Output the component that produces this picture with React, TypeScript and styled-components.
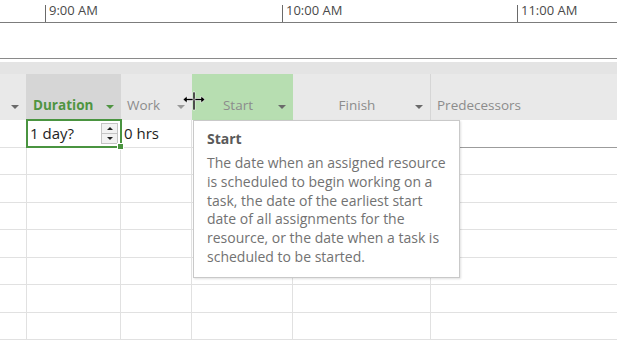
import styled, { createGlobalStyle } from 'styled-components';

const GlobalStyle = createGlobalStyle`
  html, body {
    margin: 0;
    padding: 0;
    background: #ffffff;
    overflow: hidden;
  }
  body {
    font-family: 'Open Sans', 'Noto Sans', sans-serif;
  }
`;

// layout
const COLUMNS = '27px 94px 71px 101px 138px 1fr';
const ROW_COUNT = 8;

const Page = styled.div({
  position: 'relative',
  width: '617px',
  height: '344px',
  overflow: 'hidden',
  background: '#ffffff',
});

// timescale
const Timescale = styled.div({
  display: 'flex',
  height: '22px',
  borderBottom: '1px solid #7c7c7c',
});

const TickSpacer = styled.div({
  width: '45px',
  flexShrink: 0,
});

const Tick = styled.div<{ $width: number }>((p) => ({
  width: `${p.$width}px`,
  flexShrink: 0,
  marginTop: '5px',
  borderLeft: '1px solid #6a6a6a',
  paddingLeft: '3px',
  fontSize: '13px',
  lineHeight: '11px',
  color: '#4a4a4a',
  whiteSpace: 'nowrap',
}));

const GanttBand = styled.div({
  height: '35px',
  borderBottom: '1px solid #8a8a8a',
});

const HeaderBand = styled.div({
  marginTop: '3px',
  height: '12px',
  background: '#e4e4e4',
});

// table
const Table = styled.div({
  display: 'grid',
  gridTemplateColumns: COLUMNS,
});

const HeaderCell = styled.div<{ $bg?: string; $sep?: boolean }>((p) => ({
  height: '46px',
  background: p.$bg ?? '#e9e9e9',
  borderRight: p.$sep ? '1px solid #d6d6d6' : 'none',
  display: 'flex',
  alignItems: 'flex-end',
  paddingBottom: '6px',
  paddingLeft: '6px',
  paddingRight: '7px',
  boxSizing: 'border-box',
  fontSize: '13.5px',
  color: '#8c8c8c',
}));

const HeaderLabel = styled.span<{ $active?: boolean; $center?: boolean }>((p) => ({
  flex: 1,
  textAlign: p.$center ? 'center' : 'left',
  fontWeight: p.$active ? 700 : 400,
  color: p.$active ? '#4f9441' : 'inherit',
  lineHeight: '18px',
  whiteSpace: 'nowrap',
}));

const Caret = styled.span<{ $color?: string }>((p) => ({
  width: 0,
  height: 0,
  marginBottom: '5px',
  borderLeft: '4px solid transparent',
  borderRight: '4px solid transparent',
  borderTop: `4px solid ${p.$color ?? '#6a6a6a'}`,
}));

const Cell = styled.div<{ $dark?: boolean; $noRight?: boolean }>((p) => ({
  position: 'relative',
  height: '27.5px',
  boxSizing: 'border-box',
  borderRight: p.$noRight ? 'none' : '1px solid #e1e1e1',
  borderBottom: `1px solid ${p.$dark ? '#9c9c9c' : '#e1e1e1'}`,
  display: 'flex',
  alignItems: 'center',
  paddingLeft: '3px',
  fontSize: '15px',
  color: '#1e1e1e',
}));

const ActiveCell = styled.div({
  position: 'absolute',
  inset: '-1px -2px -1px -1px',
  border: '2px solid #4a9440',
  display: 'flex',
  alignItems: 'center',
  justifyContent: 'space-between',
  paddingLeft: '2px',
  paddingRight: '2px',
  zIndex: 2,
});

const FillHandle = styled.span({
  position: 'absolute',
  right: '-4px',
  bottom: '-4px',
  width: '5px',
  height: '5px',
  background: '#4a9440',
  border: '1px solid #ffffff',
});

const Spinner = styled.div({
  display: 'flex',
  flexDirection: 'column',
  width: '15px',
  border: '1px solid #c4c4c4',
  background: '#f2f2f2',
});

const SpinButton = styled.div<{ $down?: boolean }>((p) => ({
  height: '9px',
  display: 'flex',
  alignItems: 'center',
  justifyContent: 'center',
  borderTop: p.$down ? '1px solid #c4c4c4' : 'none',
  '&::after': {
    content: '""',
    borderLeft: '3px solid transparent',
    borderRight: '3px solid transparent',
    [p.$down ? 'borderTop' : 'borderBottom']: '3px solid #222',
  },
}));

// overlays
const Tooltip = styled.div({
  position: 'absolute',
  left: '193px',
  top: '120px',
  width: '267px',
  height: '158px',
  boxSizing: 'border-box',
  background: '#ffffff',
  border: '1px solid #c9c9c9',
  boxShadow: '1px 1px 2px rgba(0, 0, 0, 0.12)',
  padding: '8px 6px 0 13px',
  zIndex: 5,
});

const TooltipTitle = styled.div({
  fontSize: '14px',
  fontWeight: 700,
  color: '#5a5a5a',
  lineHeight: '20px',
  marginBottom: '5px',
});

const TooltipBody = styled.div({
  fontSize: '14px',
  color: '#727272',
  lineHeight: '18.8px',
  whiteSpace: 'nowrap',
});

const ResizeCursor = styled.svg({
  position: 'absolute',
  left: '182px',
  top: '91px',
  zIndex: 6,
});

const headers = [
  { label: '', sep: true },
  { label: 'Duration', bg: '#d6d6d6', active: true },
  { label: 'Work', sep: false },
  { label: 'Start', bg: '#b7deb1', center: true },
  { label: 'Finish', center: true, sep: true },
  { label: 'Predecessors', noCaret: true },
];

const tooltipLines = [
  'The date when an assigned resource',
  'is scheduled to begin working on a',
  'task, the date of the earliest start',
  'date of all assignments for the',
  'resource, or the date when a task is',
  'scheduled to be started.',
];

const App = () => {
  const rows = Array.from({ length: ROW_COUNT }, (_, i) => i);
  return (
    <Page>
      <GlobalStyle />
      <Timescale>
        <TickSpacer />
        <Tick $width={233}>9:00 AM</Tick>
        <Tick $width={231}>10:00 AM</Tick>
        <Tick $width={120}>11:00 AM</Tick>
      </Timescale>
      <GanttBand />
      <HeaderBand />
      <Table>
        {headers.map((h, i) => (
          <HeaderCell key={i} $bg={h.bg} $sep={h.sep}>
            <HeaderLabel $active={h.active} $center={h.center}>
              {h.label}
            </HeaderLabel>
            {!h.noCaret && (
              <Caret $color={h.active ? '#4f9441' : i === 2 ? '#9a9a9a' : '#6a6a6a'} />
            )}
          </HeaderCell>
        ))}
        {rows.map((r) =>
          headers.map((_, c) => (
            <Cell key={`${r}-${c}`} $dark={r === 0 && c === 5} $noRight={c === 5}>
              {r === 0 && c === 1 && (
                <ActiveCell>
                  <span>1 day?</span>
                  <Spinner>
                    <SpinButton />
                    <SpinButton $down />
                  </Spinner>
                  <FillHandle />
                </ActiveCell>
              )}
              {r === 0 && c === 2 && '0 hrs'}
            </Cell>
          ))
        )}
      </Table>
      <Tooltip>
        <TooltipTitle>Start</TooltipTitle>
        <TooltipBody>
          {tooltipLines.map((line, i) => (
            <div key={i}>{line}</div>
          ))}
        </TooltipBody>
      </Tooltip>
      <ResizeCursor width="24" height="20" viewBox="0 0 24 20">
        <path d="M11 1v18h2V1z" fill="#000" stroke="#fff" strokeWidth="0.6" />
        <path
          d="M1 8.5l4-3.5v2.5h6v2h-6v2.5zM23 8.5l-4-3.5v2.5h-6v2h6v2.5z"
          fill="#000"
          stroke="#fff"
          strokeWidth="0.6"
        />
      </ResizeCursor>
    </Page>
  );
};

export default App;
